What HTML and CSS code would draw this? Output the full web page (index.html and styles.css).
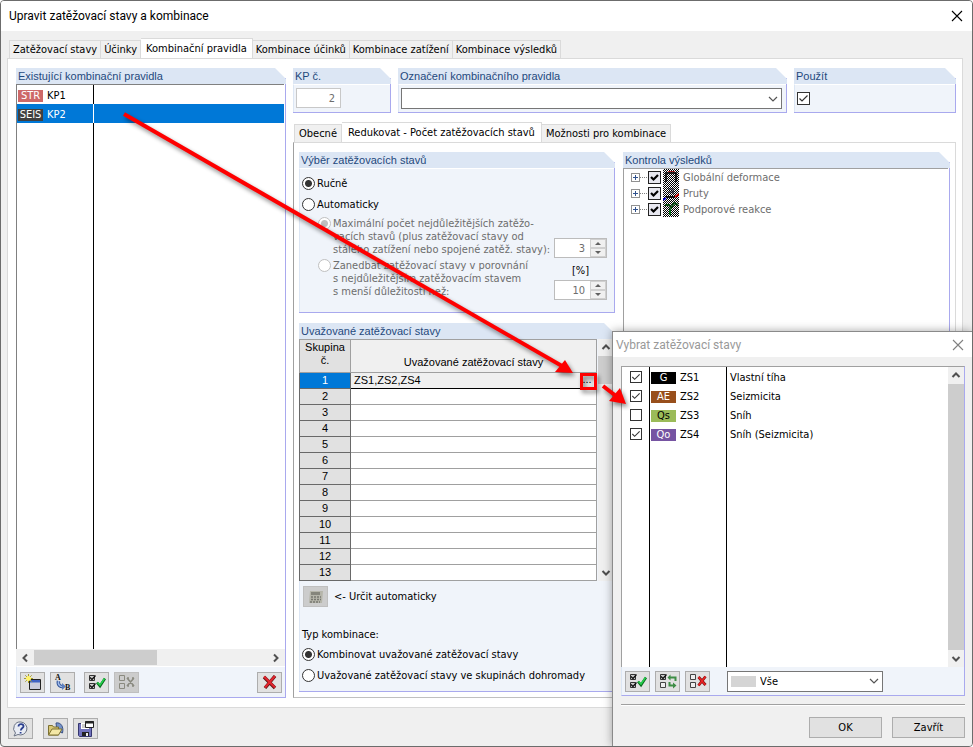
FILE: index.html
```html
<!DOCTYPE html>
<html lang="cs">
<head>
    <meta charset="UTF-8">
    <meta name="viewport" content="width=device-width, initial-scale=1.0">
    <title>Upravit zatěžovací stavy a kombinace</title>
    <link rel="stylesheet" href="styles.css">
</head>
<body>
    <!-- Sdílené ikony -->
    <svg class="sprite" width="0" height="0" aria-hidden="true">
        <symbol id="i-up" viewBox="0 0 10 10"><path d="M1.5 7 5 3.5 8.5 7" fill="none" stroke="#505050" stroke-width="2"/></symbol>
        <symbol id="i-down" viewBox="0 0 10 10"><path d="M1.5 3 5 6.5 8.5 3" fill="none" stroke="#505050" stroke-width="2"/></symbol>
        <symbol id="i-chev" viewBox="0 0 10 10"><path d="M1 3 5 7 9 3" fill="none" stroke="#555" stroke-width="1.2"/></symbol>
        <symbol id="i-left" viewBox="0 0 10 10"><path d="M7 1.5 3.5 5 7 8.5" fill="none" stroke="#505050" stroke-width="2"/></symbol>
        <symbol id="i-right" viewBox="0 0 10 10"><path d="M3 1.5 6.5 5 3 8.5" fill="none" stroke="#505050" stroke-width="2"/></symbol>
        <symbol id="i-close" viewBox="0 0 12 12"><path d="M1 1 11 11M11 1 1 11" fill="none" stroke="currentColor" stroke-width="1.1"/></symbol>
        <symbol id="i-box" viewBox="0 0 7 7"><path d="M.5.5h5v5h-5z" fill="#eee" stroke="#444"/></symbol>
        <symbol id="i-boxon" viewBox="0 0 7 7"><path d="M.5.5h5v5h-5z" fill="#ccc" stroke="#333"/><path d="m1 2.5 2 2L6.500.5" fill="none" stroke="#111" stroke-width="1.3"/></symbol>
        <symbol id="i-all" viewBox="0 0 18 16">
            <use href="#i-boxon" x="1" y="1" width="7" height="7"/><use href="#i-boxon" x="1" y="9" width="7" height="7"/>
            <path d="m9 8.500 3 3.500 5-7.500" fill="none" stroke="#0a6b1e" stroke-width="2.600"/><path d="m9.500 8.500 2.500 2.500 4.500-6.500" fill="none" stroke="#25d14c" stroke-width="1.500"/>
        </symbol>
        <symbol id="i-invert" viewBox="0 0 18 16">
            <use href="#i-boxon" x="1" y="1" width="7" height="7"/><use href="#i-box" x="1" y="9" width="7" height="7"/>
            <path d="M10 4.500h6.500v3.500M16 12.500h-5.500V9" fill="none" stroke="#3e8d45" stroke-width="2"/>
            <path d="m11.500 1.500-3 3 3 3zM14 9.500l3.500 3-3.500 3z" fill="#3e8d45"/>
        </symbol>
        <symbol id="i-none" viewBox="0 0 18 16">
            <use href="#i-box" x="1" y="1" width="7" height="7"/><use href="#i-box" x="1" y="9" width="7" height="7"/>
            <path d="m9.500 4 7 8M16.500 3.500l-7 9" fill="none" stroke="#7d1010" stroke-width="2.800"/><path d="m9.500 4 7 8M16.500 3.500l-7 9" fill="none" stroke="#e22" stroke-width="1.500"/>
        </symbol>
        <symbol id="i-noneoff" viewBox="0 0 18 16">
            <path d="M1.500 1.500h5v5h-5zM1.500 9.500h5v5h-5z" fill="none" stroke="#8a8a80"/>
            <path d="m9 4 7 8M16 4l-7 8M9 4h2M14 4h2M9 12h2M14 12h2" fill="none" stroke="#8a8a80" stroke-width="1.600"/>
        </symbol>
    </svg>

    <div class="window">
        <header class="titlebar">
            <h1>Upravit zatěžovací stavy a kombinace</h1>
            <button class="close" aria-label="Zavřít okno"><svg width="12" height="12"><use href="#i-close"/></svg></button>
        </header>

        <nav class="tabs main-tabs">
            <button class="tab">Zatěžovací stavy</button>
            <button class="tab">Účinky</button>
            <button class="tab active">Kombinační pravidla</button>
            <button class="tab">Kombinace účinků</button>
            <button class="tab">Kombinace zatížení</button>
            <button class="tab">Kombinace výsledků</button>
        </nav>

        <main class="page">
            <section class="group rules">
                <h2>Existující kombinační pravidla</h2>
                <div class="rule-list">
                    <table>
                        <tr><td><span class="tag str">STR</span>KP1</td><td></td></tr>
                        <tr class="selected"><td><span class="tag seis">SEIS</span>KP2</td><td></td></tr>
                    </table>
                </div>
                <div class="hscroll">
                    <svg width="10" height="10"><use href="#i-left"/></svg>
                    <div class="htrack"><div class="hthumb"></div></div>
                    <svg width="10" height="10"><use href="#i-right"/></svg>
                </div>
                <div class="toolbar">
                    <button class="tool" aria-label="Nové">
                        <svg width="18" height="16" viewBox="0 0 18 16"><path d="M5.500 5.500h11v10h-11z" fill="#c9cbdc" stroke="#222"/><path d="M6 6h10v2.500H6z" fill="#3f62c4"/><path d="M4.500 0v9M0 4.500h9M1.300 1.300l6.400 6.400M7.700 1.300 1.300 7.700" stroke="#a39b2c"/><circle cx="4.500" cy="4.500" r="2.500" fill="#fff36b"/></svg>
                    </button>
                    <button class="tool" aria-label="Přečíslovat">
                        <svg width="18" height="18" viewBox="0 0 18 18"><text class="ico-letter" x="1" y="7">A</text><text class="ico-letter" x="11" y="17">B</text><path d="M4.500 8c-1 4 2 6 5 5.500" fill="none" stroke="#33569a" stroke-width="3.500"/><path d="M4.500 8c-1 4 2 6 5 5.500" fill="none" stroke="#9fb9e8" stroke-width="1.500"/><path d="m8 10 4 3.500L8 17z" fill="#5c7fc0"/></svg>
                    </button>
                    <button class="tool spaced" aria-label="Vybrat vše"><svg width="18" height="16"><use href="#i-all"/></svg></button>
                    <button class="tool off" aria-label="Zrušit výběr" disabled><svg width="18" height="16"><use href="#i-noneoff"/></svg></button>
                    <button class="tool last" aria-label="Smazat">
                        <svg width="16" height="16" viewBox="0 0 16 16"><path d="M2 3 13 14M13 2 3 14" stroke="#5d1515" stroke-width="3.400"/><path d="M2 2.500 13 13.500M13 2 3 13.500" stroke="#e0242c" stroke-width="2.200"/></svg>
                    </button>
                </div>
            </section>

            <div class="detail">
                <div class="head-row">
                    <section class="group">
                        <h2><label for="kp">KP č.</label></h2>
                        <div class="body"><input class="num kp" id="kp" type="text" value="2" disabled></div>
                    </section>
                    <section class="group">
                        <h2><label for="desc">Označení kombinačního pravidla</label></h2>
                        <div class="body">
                            <div class="combo"><select id="desc"><option></option></select><svg width="10" height="10"><use href="#i-chev"/></svg></div>
                        </div>
                    </section>
                    <section class="group">
                        <h2><label for="use">Použít</label></h2>
                        <div class="body"><input class="check" id="use" type="checkbox" checked></div>
                    </section>
                </div>

                <nav class="tabs sub-tabs">
                    <button class="tab">Obecné</button>
                    <button class="tab active">Redukovat - Počet zatěžovacích stavů</button>
                    <button class="tab">Možnosti pro kombinace</button>
                </nav>

                <div class="subpage">
                    <div class="column">
                        <section class="group selection">
                            <h2>Výběr zatěžovacích stavů</h2>
                            <div class="body">
                                <label class="radio-row"><input type="radio" name="mode" checked>Ručně</label>
                                <label class="radio-row"><input type="radio" name="mode">Automaticky</label>
                                <div class="auto">
                                    <label class="radio-row multi"><input type="radio" name="auto" checked disabled><span>Maximální počet nejdůležitějších zatěžo-<br>vacích stavů (plus zatěžovací stavy od<br>stálého zatížení nebo spojené zatěž. stavy):</span></label>
                                    <div class="spin-cell">
                                        <div class="spinner">
                                            <input class="num" type="text" value="3" aria-label="Počet stavů" disabled>
                                            <div class="arrows"><button disabled aria-label="Více"></button><button class="dn" disabled aria-label="Méně"></button></div>
                                        </div>
                                    </div>
                                    <label class="radio-row multi"><input type="radio" name="auto" disabled><span>Zanedbat zatěžovací stavy v porovnání<br>s nejdůležitějším zatěžovacím stavem<br>s menší důležitostí než:</span></label>
                                    <div class="spin-cell">
                                        <label for="pct">[%]</label>
                                        <div class="spinner">
                                            <input class="num" id="pct" type="text" value="10" disabled>
                                            <div class="arrows"><button disabled aria-label="Více"></button><button class="dn" disabled aria-label="Méně"></button></div>
                                        </div>
                                    </div>
                                </div>
                            </div>
                        </section>

                        <section class="group considered">
                            <h2>Uvažované zatěžovací stavy</h2>
                            <div class="grid-wrap">
                                <table class="grid">
                                    <thead><tr><th>Skupina<br>č.</th><th>Uvažované zatěžovací stavy</th></tr></thead>
                                    <tbody>
                                        <tr class="current"><th>1</th><td><div class="cell">ZS1,ZS2,ZS4<button class="more" aria-label="Vybrat">...</button></div></td></tr>
                                        <tr><th>2</th><td></td></tr>
                                        <tr><th>3</th><td></td></tr>
                                        <tr><th>4</th><td></td></tr>
                                        <tr><th>5</th><td></td></tr>
                                        <tr><th>6</th><td></td></tr>
                                        <tr><th>7</th><td></td></tr>
                                        <tr><th>8</th><td></td></tr>
                                        <tr><th>9</th><td></td></tr>
                                        <tr><th>10</th><td></td></tr>
                                        <tr><th>11</th><td></td></tr>
                                        <tr><th>12</th><td></td></tr>
                                        <tr><th>13</th><td></td></tr>
                                    </tbody>
                                </table>
                                <div class="vscroll">
                                    <svg width="10" height="10"><use href="#i-up"/></svg>
                                    <div class="vtrack"><div class="vthumb"></div></div>
                                    <svg width="10" height="10"><use href="#i-down"/></svg>
                                </div>
                            </div>
                            <div class="body">
                                <div class="auto-row">
                                    <button class="tool off" id="calc" disabled aria-label="Určit automaticky">
                                        <svg width="16" height="14" viewBox="0 0 16 14"><path d="M2 1h13l-1 12H1z" fill="#b5b5aa"/><path d="M3 2h9v3H3z" fill="#85857c"/><path d="M3 7h10M3 9.500h10M2 12h10" stroke="#777770" stroke-width="1.500" stroke-dasharray="2 1"/></svg>
                                    </button>
                                    <label for="calc">&lt;- Určit automaticky</label>
                                </div>
                                <p>Typ kombinace:</p>
                                <label class="radio-row"><input type="radio" name="type" checked>Kombinovat uvažované zatěžovací stavy</label>
                                <label class="radio-row"><input type="radio" name="type">Uvažované zatěžovací stavy ve skupinách dohromady</label>
                            </div>
                        </section>
                    </div>

                    <section class="group results">
                        <h2>Kontrola výsledků</h2>
                        <ul class="tree">
                            <li><span class="plus"></span><span class="dots"></span><label><input class="tcheck" type="checkbox" checked><svg class="mesh" width="16" height="16" viewBox="0 0 16 16"><path d="M3 13V4h10v9" fill="none" stroke="#000" stroke-width="1.500"/><path d="M5 2.500h7" stroke="#a22"/></svg>Globální deformace</label></li>
                            <li><span class="plus"></span><span class="dots"></span><label><input class="tcheck" type="checkbox" checked><svg class="mesh" width="16" height="16" viewBox="0 0 16 16"><path d="M5 4h5v5M5 7h6" fill="none" stroke="#223"/><path d="m0 15 3-2" stroke="#00c" stroke-width="2"/><path d="M3 12h9" stroke="#111" stroke-width="2"/><path d="m12 12 4-3" stroke="#c00" stroke-width="2"/></svg>Pruty</label></li>
                            <li><span class="plus"></span><span class="dots"></span><label><input class="tcheck" type="checkbox" checked><svg class="mesh" width="16" height="16" viewBox="0 0 16 16"><path d="M2 4h4l2 3 3-5 4 2" fill="none" stroke="#0a4a14" stroke-width="2"/><path d="M7 8v6" stroke="#0b6b1b" stroke-width="2"/></svg>Podporové reakce</label></li>
                        </ul>
                    </section>
                </div>
            </div>
        </main>

        <footer class="footer">
            <button class="tool" aria-label="Nápověda">
                <svg width="18" height="16" viewBox="0 0 18 16"><path d="M9 1a6.500 6.500 0 1 1-3 12.500L2 15l1.500-3A6.500 6.500 0 0 1 9 1z" fill="#e8ecf4" stroke="#6b7384"/><path d="M6.500 5.500c0-3.500 5.500-3 5 0-.3 1.600-2.500 1.700-2.700 4M8.600 11v1.600" fill="none" stroke="#2b3f8f" stroke-width="1.800"/></svg>
            </button>
            <button class="tool gap" aria-label="Otevřít">
                <svg width="18" height="16" viewBox="0 0 18 16"><path d="M9 2c5-1 8 4 6.500 10L10 10z" fill="#7592c8" stroke="#3a5285"/><path d="M1.500 14V4.500h4l1 1.500h5V14z" fill="#d8c774" stroke="#7d7130"/><path d="m1.500 14 3.500-6h10l-3.500 6z" fill="#f3e7a6" stroke="#7d7130"/></svg>
            </button>
            <button class="tool" aria-label="Uložit">
                <svg width="18" height="16" viewBox="0 0 18 16"><path d="M1.500 2.500h13v13h-12l-1-1z" fill="#7273bd" stroke="#35366f"/><path d="M4 2h8v6H4z" fill="#fff"/><path d="M5 4h5M5 6h5" stroke="#999"/><path d="M5 11h7v4H5z" fill="#222"/><path d="M9 12h2v3H9z" fill="#eee"/><path d="M8.500.5h8v6h-8z" fill="#fff" stroke="#222"/><path d="M8 1.500h9" stroke="#222" stroke-width="2"/></svg>
            </button>
        </footer>

        <div class="dialog" role="dialog" aria-label="Vybrat zatěžovací stavy">
            <header class="dialog-title">
                <h2>Vybrat zatěžovací stavy</h2>
                <button class="close" aria-label="Zavřít dialog"><svg width="12" height="12"><use href="#i-close"/></svg></button>
            </header>
            <div class="dialog-body">
                <div class="case-box">
                    <div class="case-list">
                        <table>
                            <tr><td><input class="check small" type="checkbox" aria-label="ZS1" checked></td><td><span class="tag g">G</span>ZS1</td><td>Vlastní tíha</td></tr>
                            <tr><td><input class="check small" type="checkbox" aria-label="ZS2" checked></td><td><span class="tag ae">AE</span>ZS2</td><td>Seizmicita</td></tr>
                            <tr><td><input class="check small" type="checkbox" aria-label="ZS3"></td><td><span class="tag qs">Qs</span>ZS3</td><td>Sníh</td></tr>
                            <tr><td><input class="check small" type="checkbox" aria-label="ZS4" checked></td><td><span class="tag qo">Qo</span>ZS4</td><td>Sníh (Seizmicita)</td></tr>
                        </table>
                    </div>
                    <div class="vscroll">
                        <svg width="10" height="10"><use href="#i-up"/></svg>
                        <div class="vtrack"><div class="vthumb full"></div></div>
                        <svg width="10" height="10"><use href="#i-down"/></svg>
                    </div>
                </div>
                <div class="toolbar case-tools">
                    <button class="tool" aria-label="Vybrat vše"><svg width="18" height="16"><use href="#i-all"/></svg></button>
                    <button class="tool" aria-label="Obrátit výběr"><svg width="18" height="16"><use href="#i-invert"/></svg></button>
                    <button class="tool" aria-label="Zrušit výběr"><svg width="18" height="16"><use href="#i-none"/></svg></button>
                    <div class="combo filter"><select aria-label="Filtr"><option>Vše</option></select><span class="swatch"></span><svg width="10" height="10"><use href="#i-chev"/></svg></div>
                </div>
                <hr>
                <div class="dialog-buttons">
                    <button class="push">OK</button>
                    <button class="push">Zavřít</button>
                </div>
            </div>
        </div>

        <!-- Červené šipky nad oknem -->
        <svg class="marks" width="973" height="747" viewBox="0 0 973 747" aria-hidden="true">
            <path d="M124 114 562 366" stroke="#fe0000" stroke-width="4"/>
            <path d="M573 373 565 360 555 372z" fill="#fe0000"/>
            <path d="M603 386 616 396" stroke="#fe0000" stroke-width="4"/>
            <path d="M626 404 620 388 609 401z" fill="#fe0000"/>
            <path d="M581.500 374.500h14v14h-14z" fill="none" stroke="#fe0000" stroke-width="3"/>
        </svg>
    </div>
</body>
</html>
```

FILE: styles.css
```css
* {
    box-sizing: border-box;
}

body {
    margin: 0;
    font-family: "DejaVu Sans Condensed", "DejaVu Sans", sans-serif;
    font-size: 11px;
    line-height: 13px;
    color: #000;
}

h1, h2, p, ul {
    margin: 0;
    padding: 0;
    font-weight: normal;
}

button, input, select {
    font: inherit;
    color: inherit;
    margin: 0;
    padding: 0;
}

svg {
    display: block;
}

table {
    border-collapse: collapse;
}

.sprite {
    position: absolute;
}

/* Okno */
.window {
    position: relative;
    display: flex;
    flex-direction: column;
    min-height: 100vh;
    background-color: #f0f0f0;
    border: 1px solid #6c6c6c;
    border-radius: 4px;
    overflow: hidden;
}

.titlebar, .dialog-title {
    display: flex;
    align-items: center;
    justify-content: space-between;
    background-color: #fff;
}

.titlebar {
    height: 30px;
    padding: 0 9px 0 8px;
}

.titlebar h1, .dialog-title h2 {
    font-family: Roboto, "Noto Sans", sans-serif;
    font-size: 12px;
    line-height: 16px;
}

.close {
    display: flex;
    border: none;
    background: none;
}

/* Záložky */
.tabs {
    display: flex;
    align-items: flex-end;
}

.main-tabs {
    padding: 7px 0 0 8px;
}

.tab {
    height: 18px;
    padding: 0 3px;
    border: 1px solid #dadada;
    border-bottom: none;
    border-left-width: 0;
    background-color: #f0f0f0;
    white-space: nowrap;
}

.tab:first-child {
    border-left-width: 1px;
}

.tab.active {
    height: 21px;
    padding: 0 5px 2px;
    background-color: #fff;
    margin-bottom: -1px;
}

/* Hlavní stránka */
.page {
    flex: 1;
    display: flex;
    gap: 7px;
    margin: 0 9px 10px 6px;
    padding: 9px 6px 9px 8px;
    background-color: #fff;
    border: 1px solid #dadada;
}

.group {
    display: flex;
    flex-direction: column;
    background: linear-gradient(#a9a9ee, #a9a9ee) right 0 top 10px / 1px 100% no-repeat;
    border-bottom: 1px solid #a9a9ee;
    padding-right: 1px;
}

.group h2 {
    height: 16px;
    margin-right: -1px;
    padding-left: 2px;
    font-family: "Liberation Sans", Arial, sans-serif;
    font-size: 11px;
    line-height: 16px;
    color: #1f497d;
    background-color: #dce6f4;
    clip-path: polygon(0 0, calc(100% - 11px) 0, 100% 11px, 100% 100%, 0 100%);
}

.body, .toolbar {
    background-color: #f0f4fa;
    border-left: 1px solid #dce6f4;
    border-top: 1px solid #fff;
}

/* Seznam pravidel */
.rules {
    width: 270px;
}

.rule-list {
    flex: 1;
    border: 1px solid #808080;
    border-right: none;
    border-bottom: none;
    margin-right: 1px;
    background: linear-gradient(#000, #000) 76px 0 / 1px 100% no-repeat #fff;
}

.rule-list table {
    width: 100%;
}

.rule-list td {
    height: 19px;
    padding: 1px 0 0 1px;
}

.rule-list td:first-child {
    width: 76px;
}

.rule-list td + td {
    border-left: 1px solid #000;
}

.selected {
    background-color: #0078d7;
    color: #fff;
}

.selected td + td {
    border-left-color: #fff;
}

.tag {
    display: inline-block;
    width: 25px;
    height: 12px;
    margin-right: 4px;
    line-height: 12px;
    text-align: center;
    color: #fff;
}

.tag.str { background-color: #cd6868; }
.tag.seis { background-color: #404040; }
.tag.g { background-color: #000; }
.tag.ae { background-color: #984f1c; }
.tag.qs { background-color: #9bbb59; color: #000; }
.tag.qo { background-color: #7654a2; }

.hscroll {
    display: flex;
    align-items: center;
    gap: 4px;
    height: 17px;
    padding: 0 4px;
    background-color: #f0f0f0;
}

.htrack {
    flex: 1;
    height: 15px;
}

.hthumb {
    width: 53%;
    height: 100%;
    background-color: #cdcdcd;
}

.vscroll {
    display: flex;
    flex-direction: column;
    align-items: center;
    gap: 4px;
    width: 16px;
    padding: 3px 0;
    background-color: #f0f0f0;
}

.vtrack {
    flex: 1;
    width: 100%;
}

.vthumb {
    height: 28px;
    background-color: #cdcdcd;
}

.vthumb.full {
    height: 100%;
}

.toolbar {
    display: flex;
    align-items: center;
    gap: 5px;
    height: 31px;
    padding: 0 3px;
}

.tool {
    display: flex;
    align-items: center;
    justify-content: center;
    flex: none;
    width: 25px;
    height: 21px;
    border: 1px solid #adadad;
    background-color: #e1e1e1;
}

.tool.off {
    background-color: #ccc;
    border-color: #bfbfbf;
}

.tool.spaced {
    margin-left: 4px;
}

.tool.last {
    margin-left: auto;
}

.ico-letter {
    font: bold 8px "Liberation Serif", serif;
    fill: #111;
}

/* Pravá část */
.detail {
    flex: 1;
    display: flex;
    flex-direction: column;
}

.head-row {
    display: grid;
    grid-template-columns: 98px 1fr 162px;
    gap: 7px;
}

.head-row .body {
    height: 28px;
    padding: 3px 4px 0 2px;
}

.num {
    border: 1px solid #c8c8c8;
    background-color: #fff;
    color: #6d6d6d;
    text-align: right;
    padding-right: 5px;
}

.kp {
    width: 45px;
    height: 20px;
}

.combo {
    display: grid;
    align-items: center;
    height: 21px;
}

.combo > * {
    grid-area: 1 / 1;
}

.combo > svg {
    justify-self: end;
    margin-right: 4px;
    pointer-events: none;
}

.combo select {
    appearance: none;
    width: 100%;
    height: 21px;
    border: 1px solid #767676;
    border-radius: 0;
    background-color: #fff;
}

.check {
    display: block;
    appearance: none;
    width: 13px;
    height: 13px;
    border: 1px solid #333;
    background-color: #fff;
}

.check:checked {
    background-image: url("data:image/svg+xml,%3Csvg xmlns='http://www.w3.org/2000/svg' viewBox='0 0 11 11'%3E%3Cpath d='M1.500 5.500 4 8l5.500-5.500' fill='none' stroke='%23333' stroke-width='1.200'/%3E%3C/svg%3E");
}

.head-row .check {
    margin-top: 4px;
}

.check.small {
    width: 12px;
    height: 12px;
    margin: 0 auto;
}

.sub-tabs {
    padding: 9px 0 0 1px;
}

.sub-tabs .tab {
    padding: 0 4px;
}

.sub-tabs .active {
    padding: 0 6px 2px;
}

.subpage {
    flex: 1;
    display: grid;
    grid-template-columns: 316px 1fr;
    gap: 8px;
    padding: 9px 5px 5px;
    border: 1px solid #dadada;
    border-left-color: #a0a0a0;
    border-bottom-color: #c0c0c0;
}

.column {
    display: flex;
    flex-direction: column;
    gap: 10px;
}

.radio-row {
    display: flex;
    align-items: center;
    gap: 2px;
    height: 21px;
}

input[type="radio"] {
    appearance: none;
    flex: none;
    width: 13px;
    height: 13px;
    border: 1px solid #333;
    border-radius: 50%;
    background-color: #fff;
}

input[type="radio"]:checked {
    background-image: radial-gradient(circle, #333 3px, transparent 4px);
}

input[type="radio"]:disabled {
    border-color: #c0c0c0;
}

input[type="radio"]:checked:disabled {
    background-image: radial-gradient(circle, #c0c0c0 3px, transparent 4px);
}

.selection .body {
    padding: 4px 7px 13px 2px;
}

.auto {
    display: grid;
    grid-template-columns: 1fr 53px;
    row-gap: 3px;
    padding: 2px 0 1px 16px;
}

.radio-row.multi {
    align-items: flex-start;
    height: auto;
    color: #6d6d6d;
    white-space: nowrap;
}

.spin-cell {
    display: flex;
    flex-direction: column;
    justify-content: flex-end;
    align-items: center;
    gap: 3px;
    margin-bottom: -2px;
}

.spinner {
    display: flex;
    width: 53px;
    height: 20px;
    border: 1px solid #bcbcbc;
    background-color: #f0f0f0;
}

.spinner .num {
    width: 35px;
    border: none;
}

.arrows {
    flex: 1;
    display: flex;
    flex-direction: column;
}

.arrows button {
    flex: 1;
    display: flex;
    align-items: center;
    justify-content: center;
    border: 1px solid #d0d0d0;
    background-color: #f0f0f0;
}

.arrows button::before {
    content: "";
    border: 3px solid transparent;
    border-top-width: 0;
    border-bottom-color: #606060;
}

.arrows .dn::before {
    border-width: 3px 3px 0;
    border-color: #606060 transparent;
}

/* Tabulka skupin */
.considered {
    flex: 1;
}

.grid-wrap {
    display: flex;
    gap: 1px;
    background-color: #f0f4fa;
}

.grid {
    flex: 1;
    font-family: "Liberation Sans", Arial, sans-serif;
    font-size: 11px;
    table-layout: fixed;
}

.grid th, .grid td {
    height: 16px;
    padding: 0;
    border: 1px solid #a0a0a0;
    font-weight: normal;
    line-height: 13px;
}

.grid thead th {
    height: 33px;
    background-color: #f0f0f0;
    vertical-align: bottom;
    padding-bottom: 3px;
}

.grid thead th:first-child {
    width: 51px;
    background-color: #e1e1e1;
    padding-bottom: 5px;
}

.grid tbody th {
    background-color: #e1e1e1;
    border-color: #696969;
}

.grid td {
    background-color: #fff;
}

.grid .current th {
    background-color: #0078d7;
    color: #fff;
}

.grid .current td {
    background-color: #f0f0f0;
    border: 1px solid #000;
}

.cell {
    display: flex;
    justify-content: space-between;
    padding: 0 3px;
    height: 15px;
    align-items: center;
}

.more {
    width: 12px;
    height: 12px;
    padding-bottom: 3px;
    border: none;
    background-color: #e1e1e1;
    line-height: 7px;
}

.considered .body {
    flex: 1;
    padding: 5px 2px;
    border-top: none;
}

.auto-row {
    display: flex;
    align-items: center;
    gap: 6px;
    padding-left: 1px;
    margin-bottom: 21px;
}

.considered p {
    margin-bottom: 3px;
}

/* Strom výsledků */
.tree {
    flex: 1;
    list-style: none;
    padding: 0 0 0 7px;
    margin-right: 1px;
    border: 1px solid #a0a0a0;
    border-right: none;
    border-bottom: none;
    background-color: #fff;
    color: #6d6d6d;
}

.tree li, .tree label {
    display: flex;
    align-items: center;
    height: 16px;
}

.plus {
    width: 9px;
    height: 9px;
    border: 1px solid #919191;
    background:
        linear-gradient(#31538f, #31538f) center / 5px 1px no-repeat,
        linear-gradient(#31538f, #31538f) center / 1px 5px no-repeat;
}

.dots {
    width: 7px;
    margin-right: 1px;
    border-top: 1px dotted #808080;
}

.tcheck {
    appearance: none;
    width: 13px;
    height: 13px;
    margin-right: 2px;
    border: 1px solid #222;
    background-color: #e8e8f0;
}

.tcheck:checked {
    background-image: url("data:image/svg+xml,%3Csvg xmlns='http://www.w3.org/2000/svg' viewBox='0 0 11 11'%3E%3Cpath d='M2 5 4.500 7.500 9 3' fill='none' stroke='%23000' stroke-width='2.200'/%3E%3C/svg%3E");
}

.mesh {
    margin-right: 4px;
    background: repeating-conic-gradient(#000 0 25%, #fff 0 50%) 0 0 / 2px 2px;
}

.footer {
    display: flex;
    gap: 5px;
    padding: 0 7px 7px;
}

.footer .gap {
    margin-left: 5px;
}

/* Dialog */
.dialog {
    position: absolute;
    right: 0;
    bottom: 0;
    width: 360px;
    border-left: 1px solid #8a8a8a;
    border-top: 1px solid #8a8a8a;
    background-color: #f0f0f0;
    box-shadow: 0 0 9px rgba(0, 0, 0, 0.35);
}

.dialog-title {
    height: 25px;
    padding: 0 8px 0 3px;
    color: #999;
}

.dialog-title .close {
    color: #808080;
}

.dialog-body {
    padding: 9px 7px 8px 8px;
}

.case-box {
    display: flex;
    height: 301px;
    border: 1px solid #a0a0a0;
    border-bottom: none;
    border-right-color: #a9a9ee;
    background-color: #fff;
}

.case-list {
    flex: 1;
    background:
        linear-gradient(#000, #000) 27px 0 / 1px 100% no-repeat,
        linear-gradient(#000, #000) 104px 0 / 1px 100% no-repeat;
}

.case-list td {
    height: 19px;
    padding: 1px 0 0 3px;
    white-space: nowrap;
}

.case-list td:first-child {
    width: 28px;
    padding: 0;
}

.case-list td:nth-child(2) {
    width: 77px;
    padding-left: 1px;
}

.case-tools {
    height: 29px;
    border-top: none;
    border-right: 1px solid #a9a9ee;
    border-bottom: 1px solid #a9a9ee;
}

.filter {
    width: 156px;
    margin-left: 12px;
}

.filter select {
    padding-left: 32px;
}

.swatch {
    width: 25px;
    height: 11px;
    margin-left: 4px;
    background-color: #d5d5d5;
    pointer-events: none;
}

hr {
    height: 2px;
    margin: 8px 0 11px;
    border: none;
    border-top: 1px solid #a0a0a0;
    border-bottom: 1px solid #fff;
}

.dialog-buttons {
    display: flex;
    justify-content: flex-end;
    gap: 10px;
}

.push {
    width: 73px;
    height: 21px;
    border: 1px solid #adadad;
    background-color: #e1e1e1;
}

/* Šipky */
.marks {
    position: absolute;
    top: -1px;
    left: -1px;
    pointer-events: none;
    filter: drop-shadow(2px 3px 2px rgba(0, 0, 0, 0.45));
}
```
